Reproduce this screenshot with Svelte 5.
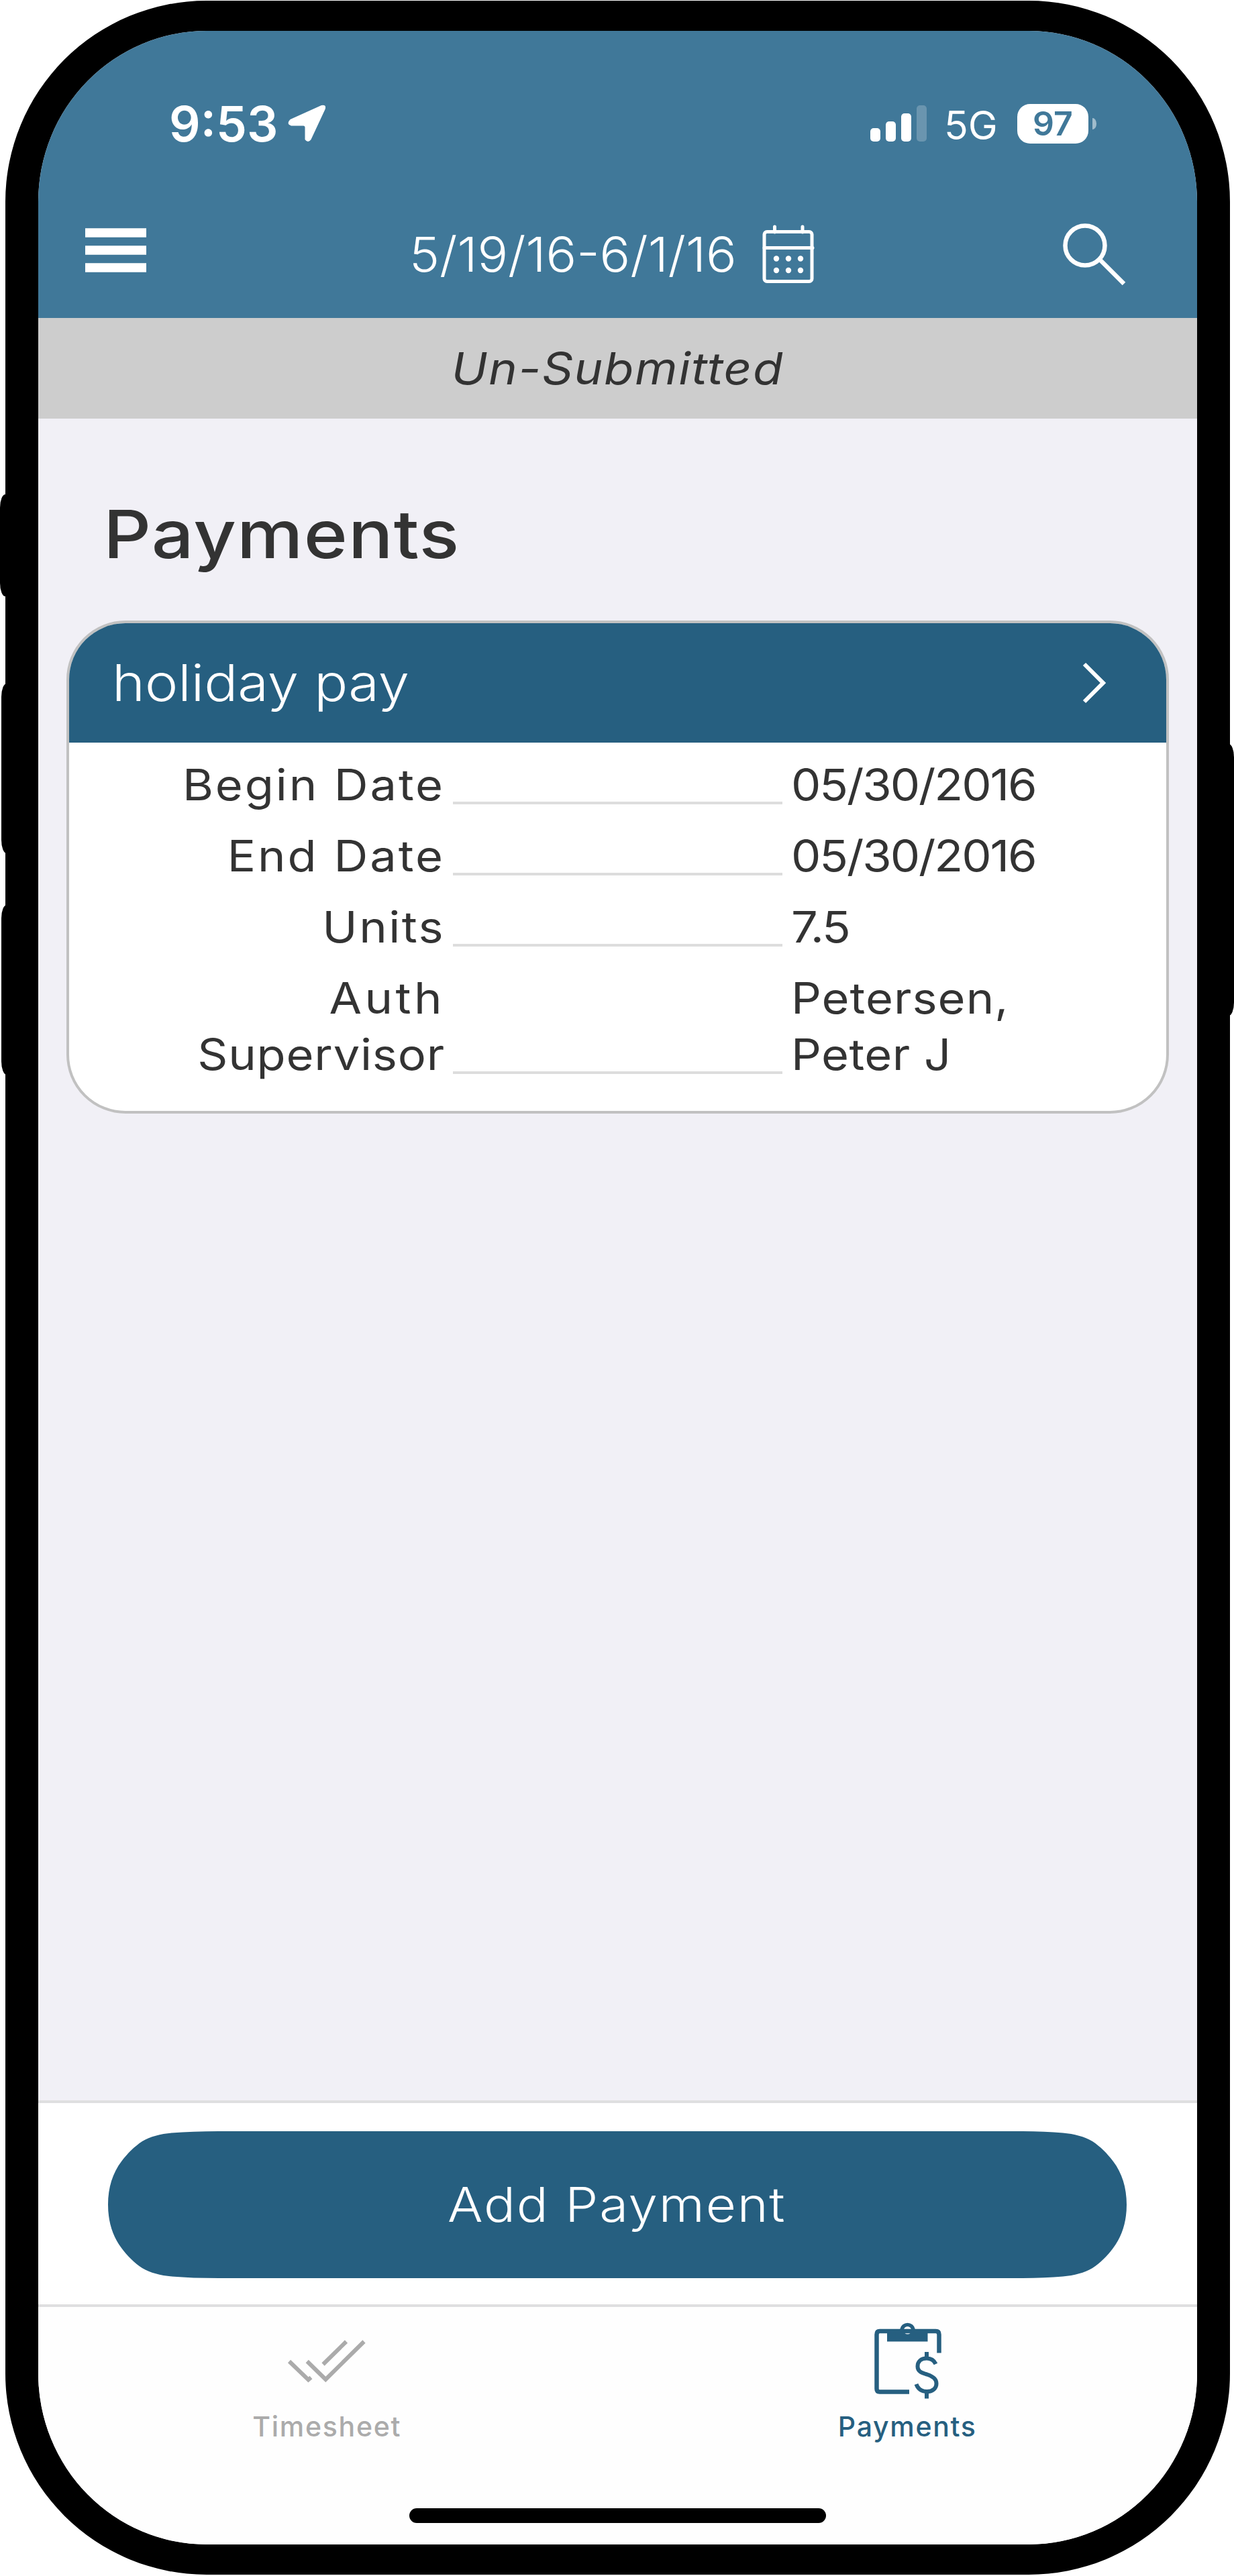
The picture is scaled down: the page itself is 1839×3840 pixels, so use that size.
<script>
  const period = '5/19/16-6/1/16';

  // spacing is the tracking of each line, in px
  const payment = {
    name: 'holiday pay',
    rows: [
      {
        label: [{ text: 'Begin Date', spacing: 2.6 }],
        value: [{ text: '05/30/2016', spacing: -1.9 }]
      },
      {
        label: [{ text: 'End Date', spacing: 2.7 }],
        value: [{ text: '05/30/2016', spacing: -1.9 }]
      },
      {
        label: [{ text: 'Units', spacing: 2.2 }],
        value: [{ text: '7.5', spacing: -2 }]
      },
      {
        label: [{ text: 'Auth', spacing: 4 }, { text: 'Supervisor', spacing: 0.7 }],
        value: [{ text: 'Petersen,', spacing: 0.9 }, { text: 'Peter J', spacing: 0.4 }]
      }
    ]
  };
</script>

<div class="phone">
  <!-- hardware buttons -->
  <span class="key mute"></span>
  <span class="key volume-up"></span>
  <span class="key volume-down"></span>
  <span class="key power"></span>

  <div class="screen">
    <header>
      <div class="status">
        <span class="time">9:53</span>
        <svg class="arrow" width="58" height="56" viewBox="0 0 58 56">
          <path d="M3.500 22L50 1Q58 -0.500 55.500 7L34.500 52Q30 58 25.500 52V34Q25.500 31.500 23 31.500H5Q-3 29 3.500 22Z" fill="#fff" />
        </svg>
        <div class="bars">
          <i class="b1"></i><i class="b2"></i><i class="b3"></i><i class="b4"></i>
        </div>
        <span class="network">5G</span>
        <span class="battery">97</span>
        <span class="nub"></span>
      </div>

      <nav>
        <svg class="menu" width="91" height="66" viewBox="0 0 91 66">
          <path d="M0 7H91M0 33H91M0 59H91" stroke="#fff" stroke-width="13.500" />
        </svg>
        <span class="period">{period}</span>
        <svg class="calendar" width="78" height="88" viewBox="0 0 78 88" fill="none" stroke="#fff" stroke-width="5">
          <rect x="3" y="10.500" width="71" height="74" rx="4" />
          <path d="M3 34.500H75M18.500 11V3M60 11V3" stroke-linecap="round" />
          <g fill="#fff" stroke="none">
            <circle cx="21" cy="50.500" r="4.200" /><circle cx="39" cy="50.500" r="4.200" /><circle cx="57" cy="50.500" r="4.200" />
            <circle cx="21" cy="68" r="4.200" /><circle cx="39" cy="68" r="4.200" /><circle cx="57" cy="68" r="4.200" />
          </g>
        </svg>
        <svg class="search" width="94" height="94" viewBox="0 0 94 94" fill="none" stroke="#fff" stroke-width="6.500">
          <circle cx="33" cy="34" r="29.500" />
          <path d="M54 54L91 91" />
        </svg>
      </nav>
    </header>

    <div class="state"><span>Un-Submitted</span></div>

    <main>
      <h1>Payments</h1>
      <section class="card">
        <div class="card-head">
          <h2>{payment.name}</h2>
          <svg width="36" height="62" viewBox="0 0 36 62" fill="none" stroke="#fff" stroke-width="6">
            <path d="M3 3L31 31L3 59" />
          </svg>
        </div>
        <dl>
          {#each payment.rows as row}
            <div class="row">
              <dt>
                {#each row.label as line}
                  <span style:letter-spacing="{line.spacing}px">{line.text}</span>
                {/each}
              </dt>
              <i class="rule"></i>
              <dd>
                {#each row.value as line}
                  <span style:letter-spacing="{line.spacing}px">{line.text}</span>
                {/each}
              </dd>
            </div>
          {/each}
        </dl>
      </section>
    </main>

    <div class="actions">
      <button><span>Add Payment</span></button>
    </div>

    <footer>
      <div class="tab timesheet">
        <svg width="118" height="104" viewBox="0 0 118 104" fill="none" stroke="#ababab" stroke-width="6">
          <path d="M3 55L31.500 82.500L35.500 79M29.700 55L57.300 82L114.500 25.500M53.500 59.500L88 25.500" />
        </svg>
        <span>Timesheet</span>
      </div>
      <div class="tab active">
        <svg width="100" height="104" viewBox="0 0 100 104" fill="none" stroke="#265f80" stroke-width="6.500">
          <path d="M53 100.500H9Q4.500 100.500 4.500 96V15Q4.500 10 9 10H92.500Q97.500 10 97.500 15V42.500" />
          <path fill="#265f80" stroke="none" fill-rule="evenodd" d="M20 7H39.200A11.500 11.500 0 0 1 61.800 7H80.500V25.500H20ZM50.500 3A5.800 5.800 0 1 0 50.500 14.600A5.800 5.800 0 1 0 50.500 3Z" />
          <path stroke-width="6" d="M79 41V51M79 99V110.500M92.500 59C89.500 52.500 85 50.500 79 50.500C70.500 50.500 65.500 55.500 65.500 62.500C65.500 70.500 72.500 72.500 79.500 74.500C87.500 77 93.500 80.500 93.500 88C93.500 95.500 87.500 100 79.500 100C71.500 100 66 96 63.500 89" />
        </svg>
        <span>Payments</span>
      </div>
      <div class="home"></div>
    </footer>
  </div>
</div>

<style>
  :global(body) {
    margin: 0;
    background: #fff;
  }
  .phone {
    position: relative;
    box-sizing: border-box;
    width: 1839px;
    height: 3840px;
    padding: 1px 6px 2px 8px;
    font-family: Inter, "Open Sans", sans-serif;
    color: #333;
  }
  .key {
    position: absolute;
    left: 0;
    width: 30px;
    background: #000;
    border-radius: 8px / 20px;
  }
  .mute { top: 737px; height: 152px; }
  .volume-up { top: 1019px; height: 253px; left: 2px; }
  .volume-down { top: 1349px; height: 253px; left: 2px; }
  .power { top: 1109px; height: 405px; left: auto; right: 0; }

  .screen {
    position: relative;
    box-sizing: border-box;
    height: 3837px;
    border: solid #000;
    border-width: 45px 49px;
    border-radius: 300px;
    background: #f1f0f6;
    overflow: hidden;
    display: flex;
    flex-direction: column;
  }

  header {
    height: 428px;
    background: #407899;
    color: #fff;
  }
  .status {
    display: flex;
    align-items: center;
    height: 112px;
    padding: 82px 150px 0 195px;
  }
  .time {
    font-size: 73px;
    font-weight: 600;
    width: 177px;
  }
  .bars {
    display: flex;
    align-items: flex-end;
    gap: 8px;
    height: 54px;
    margin-left: auto;
    & i {
      width: 15px;
      border-radius: 5px;
      background: #fff;
    }
    & .b1 { height: 20px; }
    & .b2 { height: 30px; }
    & .b3 { height: 42px; }
    & .b4 { height: 54px; opacity: .22; }
  }
  .network {
    margin-left: 26px;
    width: 109px;
    font-size: 59px;
    font-weight: 400;
    padding-top: 4px;
  }
  .battery {
    width: 106px;
    height: 59px;
    line-height: 59px;
    border-radius: 19px;
    background: #fff;
    color: #407899;
    font-size: 50px;
    font-weight: 600;
    text-align: center;
  }
  .nub {
    width: 6px;
    height: 17px;
    margin-left: 6px;
    border-radius: 0 6px 6px 0 / 0 9px 9px 0;
    background: #fff;
    opacity: .5;
  }
  nav {
    display: flex;
    align-items: center;
    height: 92px;
    padding: 93px 106px 0 70px;
  }
  .menu { margin-bottom: 13px; }
  .period {
    margin-left: 392px;
    margin-bottom: 2px;
    width: 526px;
    font-size: 72px;
    font-weight: 300;
    white-space: nowrap;
    transform: scaleX(1.055);
    transform-origin: left;
  }
  .search { margin-left: auto; }

  .state {
    height: 150px;
    line-height: 150px;
    background: #cdcdcd;
    text-align: center;
    font-size: 66px;
    font-style: italic;
    & span {
      display: inline-block;
      letter-spacing: 1.4px;
      transform: scaleX(1.1);
    }
  }

  main {
    flex: 1;
    padding: 0 42px;
  }
  h1 {
    margin: 112px 0 0 55px;
    font-size: 99px;
    line-height: 120px;
    font-weight: 500;
    letter-spacing: 1px;
    transform: scaleX(1.12);
    transform-origin: left;
  }
  .card {
    margin-top: 69px;
    border: 4px solid #c1c1c1;
    border-radius: 88px;
    background: #fff;
    overflow: hidden;
  }
  .card-head {
    display: flex;
    align-items: center;
    justify-content: space-between;
    height: 178px;
    padding: 0 89px 0 64px;
    background: #265f80;
    color: #fff;
    & h2 {
      margin: 0 0 3px;
      font-size: 76px;
      font-weight: 300;
      transform: scaleX(1.095);
      transform-origin: left;
    }
  }
  dl {
    margin: 0;
    padding: 21px 0 42px;
    display: flex;
    flex-direction: column;
    gap: 22px;
  }
  .row {
    display: grid;
    grid-template-columns: 560px 491px 1fr;
    column-gap: 12px;
    font-size: 64px;
    line-height: 84px;
    & dt { text-align: right; }
    & dd { margin: 0 0 0 1px; }
    & span {
      display: block;
      transform: scaleX(1.1);
      transform-origin: left;
    }
    & dt span { transform-origin: right; }
  }
  .rule {
    align-self: end;
    height: 4px;
    margin-bottom: 13px;
    background: #ddd;
  }

  .actions {
    border: solid #dfdfe0;
    border-width: 4px 0;
    background: #fff;
    padding: 42px 105px 39px 104px;
    & button {
      display: block;
      width: 100%;
      height: 219px;
      padding: 0 2px 2px 0;
      border: 0;
      clip-path: path("M0 109.500C0 84 7 62 20 45C29 33 39 23 51 15C63 8 78 4 95 2.500Q125 0 165 0H1353Q1393 0 1423 2.500C1440 4 1455 8 1467 15C1479 23 1489 33 1498 45C1511 62 1518 84 1518 109.500C1518 135 1511 157 1498 174C1489 186 1479 196 1467 204C1455 211 1440 215 1423 216.500Q1393 219 1353 219H165Q125 219 95 216.500C78 215 63 211 51 204C39 196 29 186 20 174C7 157 0 135 0 109.500Z");
      background: #265f80;
      color: #fff;
      font: 300 71px Inter, sans-serif;
      letter-spacing: 1.6px;
    }
    & span {
      display: inline-block;
      transform: scaleX(1.1);
    }
  }

  footer {
    position: relative;
    box-sizing: border-box;
    height: 354px;
    padding-top: 26px;
    background: #fefefe;
    display: grid;
    grid-template-columns: 1fr 1fr;
  }
  .tab {
    display: flex;
    flex-direction: column;
    align-items: center;
    color: #ababab;
    font-size: 41px;
    font-weight: 500;
    line-height: 50px;
    letter-spacing: 1.7px;
    & svg { overflow: visible; }
    & span { margin-top: 23px; }
  }
  .timesheet {
    padding-right: 3px;
  }
  .active {
    color: #265f80;
  }
  .home {
    position: absolute;
    left: 553px;
    bottom: 32px;
    width: 621px;
    height: 22px;
    border-radius: 11px;
    background: #000;
  }
</style>
